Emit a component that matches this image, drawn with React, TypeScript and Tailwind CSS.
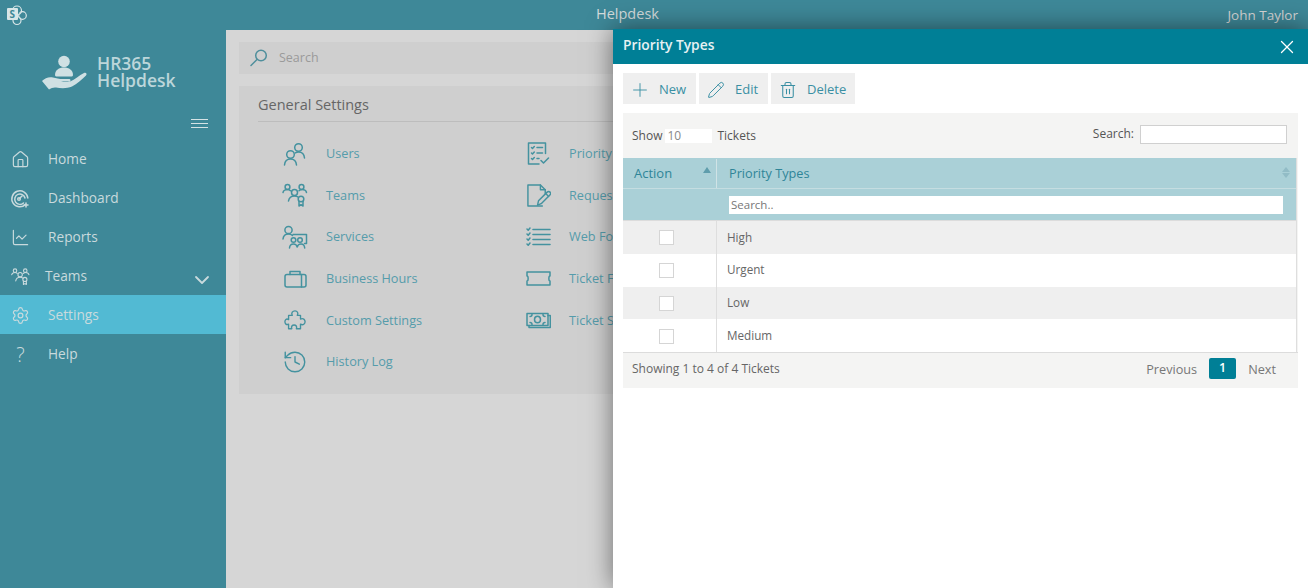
import React from 'react';
import { Home, LineChart, Settings, ChevronDown, Plus, Pencil, Trash2, X, History } from 'lucide-react';

type IconProps = { className?: string };

const Svg = ({ className, children, box = '0 0 28 28' }: IconProps & { children: React.ReactNode; box?: string }) => (
  <svg viewBox={box} fill="none" stroke="currentColor" strokeWidth="1.5" strokeLinecap="round" strokeLinejoin="round" className={className}>
    {children}
  </svg>
);

const SharePointLogo = () => (
  <svg viewBox="0 0 22 22" className="w-[22px] h-[22px] text-[#d8e6e8]" fill="none" stroke="currentColor" strokeWidth="1.2">
    <circle cx="11" cy="6.5" r="4.5" />
    <circle cx="16.5" cy="11.5" r="3.8" />
    <circle cx="11" cy="16.5" r="4" />
    <rect x="1" y="4" width="11" height="12" rx="1" fill="currentColor" stroke="none" />
    <text x="3.6" y="13.5" fontSize="10" fontWeight="700" fill="#3e8898" stroke="none" fontFamily="Open Sans, sans-serif">S</text>
  </svg>
);

const HandLogo = () => (
  <svg viewBox="0 0 50 38" className="w-[50px] h-[38px] text-[#cfe0e3]" fill="currentColor">
    <circle cx="23" cy="6.5" r="5.8" />
    <path d="M14 20c0-5 4-7.5 9-7.5s9 2.5 9 7.5c0 1-1 1.5-2 1.5H16c-1 0-2-.5-2-1.5z" />
    <path d="M1 26c3-3 7-4.5 11-3.5 3 .8 6 1.5 10 1.5h6c2 0 2 2.5 0 2.5h-8c3 .8 6 .8 9 0 5-2 9-6 14-8.5 2-1 3.5 1 2 2.5-4 4-9 8.5-14 11-5 2.2-11 2-16 1-2-.4-5 .5-7 2z" />
  </svg>
);

const SearchGlass = ({ className }: IconProps) => (
  <Svg className={className} box="0 0 18 18">
    <circle cx="11" cy="6.5" r="5.3" />
    <path d="M7 10.5L1 16.5" />
  </Svg>
);

const DashIcon = ({ className }: IconProps) => (
  <Svg className={className} box="0 0 20 20">
    <path d="M15.5 15.5A8 8 0 1 1 17.8 9" />
    <path d="M13.5 14A5.2 5.2 0 1 1 15 9" />
    <path d="M9.5 9.5l2.5-2.5" />
    <circle cx="9" cy="10" r="1.3" />
    <path d="M16 14v4M14 16h4" />
  </Svg>
);

const TeamsIcon = ({ className }: IconProps) => (
  <Svg className={className} box="0 0 26 24">
    <circle cx="5.5" cy="4" r="2.4" />
    <circle cx="19.5" cy="4" r="2.4" />
    <circle cx="12.5" cy="9.5" r="3" />
    <path d="M1 9.5c.5-2 2-3 4.5-3 1 0 2 .3 3 1.2M24.5 9.5c-.4-2-2-3-4.500-3-1 0-2 .3-3 1.200M6.5 18c.5-3 3-5 6-5 1.5 0 2.5.3 3.5 1" />
    <circle cx="19" cy="16" r="2.8" />
    <path d="M17 18.5V23l2-1.3 2 1.3v-4.5" />
  </Svg>
);

const UsersIcon = ({ className }: IconProps) => (
  <Svg className={className} box="0 0 24 24">
    <circle cx="15.5" cy="5.5" r="3.8" />
    <path d="M21.5 16c-.3-3.5-2.5-6-6-6-1.2 0-2.3.3-3.2.9" />
    <circle cx="7.5" cy="12.5" r="3.8" />
    <path d="M1.500 23c.3-3.5 2.5-6 6-6s5.700 2.500 6 6" />
  </Svg>
);

const ServicesIcon = ({ className }: IconProps) => (
  <Svg className={className} box="0 0 26 24">
    <circle cx="6.5" cy="5" r="3.6" />
    <path d="M1 14c.3-3 2.5-5 5.500-5 1.500 0 3 .6 4 1.500" />
    <path d="M11 9.5h13.5v9h-2" />
    <circle cx="11.5" cy="15" r="2.3" />
    <circle cx="18" cy="15" r="2.3" />
    <path d="M7.5 23c.2-2.5 1.8-4 4-4s3.3 1.3 3.7 3c.4-1.7 1.6-3 3.8-3s3.5 1.5 3.7 4" />
  </Svg>
);

const CaseIcon = ({ className }: IconProps) => (
  <Svg className={className} box="0 0 23 18">
    <rect x="1" y="4.5" width="21" height="12.5" rx="2" />
    <path d="M6 4.5V1.500h10v3M17.500 4.500V17" />
  </Svg>
);

const PuzzleIcon = ({ className }: IconProps) => (
  <Svg className={className} box="0 0 24 24">
    <path d="M5 7h4c-1.5-3 .5-5 3-5s4 2.5 2.5 5H18v4c3-1.5 5 .5 5 3s-2.5 4-5 2.5v5h-4.5c1-2.5-.5-4-2.5-4s-3.5 1.5-2.5 4H5v-5c-2.5 1.2-4-.5-4-2.5S2.5 10 5 11.5z" />
  </Svg>
);

const ChecklistIcon = ({ className }: IconProps) => (
  <Svg className={className} box="0 0 24 24">
    <path d="M19.5 12V1.5h-17v21H13" />
    <path d="M5.5 6l1 1 1.8-2M5.5 11.5l1 1 1.8-2M5.5 17l1 1 1.8-2M11 6h5.5M11 11.5h5.5M11 17h2" />
    <path d="M15 19l2.5 2.5 5-5" />
  </Svg>
);

const RequestIcon = ({ className }: IconProps) => (
  <Svg className={className} box="0 0 26 26">
    <path d="M17 24H2V2h13l5 5v4" />
    <path d="M15 2v5h5" />
    <path d="M12 23l1-4.5 9-9c1-1 2-1 3 0s.8 2-.2 3l-9 9z" />
    <path d="M20.5 11l3 3" />
  </Svg>
);

const ListIcon = ({ className }: IconProps) => (
  <Svg className={className} box="0 0 25 20">
    <path d="M1 2l1.2 1.2L4 1M1 7l1.2 1.2L4 6M1 12l1.2 1.2L4 11M1 17l1.2 1.2L4 16" />
    <path d="M7 2.5h17M7 7.5h17M7 12.5h17M7 17.5h17" strokeWidth="1.6" />
  </Svg>
);

const TicketIcon = ({ className }: IconProps) => (
  <Svg className={className} box="0 0 25 15">
    <path d="M1 1h23v4c-1.5 0-1.5 5 0 5v4H1v-4c1.5 0 1.5-5 0-5z" />
  </Svg>
);

const MoneyIcon = ({ className }: IconProps) => (
  <Svg className={className} box="0 0 25 16">
    <rect x="1" y="1" width="21" height="12" />
    <path d="M22 3h2.3v12H3v-2" />
    <ellipse cx="11.5" cy="7" rx="3" ry="3.3" />
    <path d="M4 4c1.5 0 2-.5 2-2M19 4c-1.5 0-2-.5-2-2M4 10c1.5 0 2 .5 2 2M19 10c-1.5 0-2 .5-2 2" />
  </Svg>
);

const navItems = [
  { label: 'Home', icon: <Home className="w-[19px] h-[19px]" strokeWidth={1.5} /> },
  { label: 'Dashboard', icon: <DashIcon className="w-[20px] h-[20px]" /> },
  { label: 'Reports', icon: <LineChart className="w-[19px] h-[19px]" strokeWidth={1.5} /> },
];

const leftLinks = [
  { label: 'Users', icon: <UsersIcon className="w-[24px] h-[24px]" /> },
  { label: 'Teams', icon: <TeamsIcon className="w-[26px] h-[24px]" /> },
  { label: 'Services', icon: <ServicesIcon className="w-[26px] h-[24px]" /> },
  { label: 'Business Hours', icon: <CaseIcon className="w-[23px] h-[18px]" /> },
  { label: 'Custom Settings', icon: <PuzzleIcon className="w-[22px] h-[22px]" /> },
  { label: 'History Log', icon: <History className="w-[26px] h-[26px]" strokeWidth={1.3} /> },
];

const rightLinks = [
  { label: 'Priority Types', icon: <ChecklistIcon className="w-[24px] h-[25px]" /> },
  { label: 'Request Types', icon: <RequestIcon className="w-[25px] h-[25px]" /> },
  { label: 'Web Forms', icon: <ListIcon className="w-[25px] h-[20px]" /> },
  { label: 'Ticket Fields', icon: <TicketIcon className="w-[25px] h-[15px]" /> },
  { label: 'Ticket Status', icon: <MoneyIcon className="w-[25px] h-[17px]" /> },
];

const rows = ['High', 'Urgent', 'Low', 'Medium'];

const SettingsLink = ({ label, icon }: { label: string; icon: React.ReactNode }) => (
  <div className="flex items-center h-[41.6px] whitespace-nowrap">
    <span className="w-[26px] flex justify-center text-[#44929f]">{icon}</span>
    <span className="ml-[18px] text-[12.7px] text-[#559cab]">{label}</span>
  </div>
);

const ToolButton = ({ label, icon, className }: { label: string; icon: React.ReactNode; className: string }) => (
  <button type="button" className={`flex items-center h-[31px] pt-[2px] bg-[#efefef] text-[#3a8fa3] text-[13px] ${className}`}>
    {icon}
    <span>{label}</span>
  </button>
);

export default function App() {
  return (
    <div className="relative w-[1308px] h-[588px] overflow-hidden bg-[#d6d6d6] font-['Open_Sans','Noto_Sans',sans-serif]">
      <header className="relative flex items-center justify-between h-[30px] bg-[#3e8898] pl-[6px] pr-[10px]">
        <SharePointLogo />
        <span className="absolute left-[596px] top-[3px] text-[14.5px] text-[#d4dcdd]">Helpdesk</span>
        <span className="text-[13.5px] text-[#d6d6d6]">John Taylor</span>
      </header>

      <div className="flex h-[558px]">
        <aside className="w-[226px] shrink-0 bg-[#3e8898] text-[#c9dadd]">
          <div className="flex items-center h-[85px] pl-[41px] pt-[2px]">
            <HandLogo />
            <div className="ml-[6px] mt-[-3px] text-[17.5px] leading-[17px] font-semibold text-[#bcd6da]">
              HR365
              <br />
              Helpdesk
            </div>
          </div>
          <div className="flex justify-end pr-[18px] h-[24px]">
            <div className="flex flex-col gap-[3px] w-[17px] mt-[4px]">
              <span className="h-px bg-[#d5e3e5]" />
              <span className="h-px bg-[#d5e3e5]" />
              <span className="h-px bg-[#d5e3e5]" />
            </div>
          </div>
          <nav>
            {navItems.map((item) => (
              <div key={item.label} className="flex items-center h-[39px] pt-[2px] pl-[10px]">
                <span className="w-[20px] flex justify-center">{item.icon}</span>
                <span className="ml-[18px] text-[13.7px]">{item.label}</span>
              </div>
            ))}
            <div className="flex items-center h-[39px] pt-[2px] pl-[11px]">
              <TeamsIcon className="w-[19px] h-[19px]" />
              <span className="ml-[15px] text-[13.7px]">Teams</span>
              <ChevronDown className="ml-auto mr-[12px] mt-[6px] w-[24px] h-[24px]" strokeWidth={1.8} />
            </div>
            <div className="flex items-center h-[39px] pt-[2px] pl-[11px] bg-[#52bad3]">
              <Settings className="w-[19px] h-[19px]" strokeWidth={1.5} />
              <span className="ml-[18px] text-[13.7px]">Settings</span>
            </div>
            <div className="flex items-center h-[39px] pt-[2px] pl-[11px]">
              <span className="w-[19px] text-center text-[20px] font-light">?</span>
              <span className="ml-[18px] text-[13.7px]">Help</span>
            </div>
          </nav>
        </aside>

        <main className="flex-1 pl-[13px] pt-[12px]">
          <div className="flex items-center h-[32px] bg-[#cfcfcf] pl-[11px]">
            <SearchGlass className="w-[18px] h-[18px] text-[#4f8f9c]" />
            <span className="ml-[11px] text-[12.5px] text-[#9a9a9a]">Search</span>
          </div>
          <section className="mt-[12px] h-[308px] bg-[#cfcfcf] pl-[19px] pt-[9px]">
            <h2 className="text-[14.5px] leading-[20px] text-[#666]">General Settings</h2>
            <div className="mt-[6px] h-px bg-[#bdbdbd]" />
            <div className="flex mt-[11px] pl-[24px]">
              <div className="w-[243px]">
                {leftLinks.map((l) => (
                  <SettingsLink key={l.label} {...l} />
                ))}
              </div>
              <div>
                {rightLinks.map((l) => (
                  <SettingsLink key={l.label} {...l} />
                ))}
              </div>
            </div>
          </section>
        </main>
      </div>

      {/* slide-in panel */}
      <div className="absolute right-0 top-[29px] bottom-0 w-[695px] bg-white shadow-[0_0_24px_rgba(0,0,0,0.5)]">
        <div className="flex items-center justify-between h-[35px] pb-[2px] bg-[#007f96] pl-[10px] pr-[10px]">
          <span className="text-[13.8px] font-semibold text-[#e6f1f3]">Priority Types</span>
          <X className="w-[22px] h-[22px] mt-[2px] text-white" strokeWidth={1.4} />
        </div>

        <div className="flex gap-[3px] mt-[9px] ml-[10px]">
          <ToolButton label="New" className="w-[73px] pl-[6px]" icon={<Plus className="w-[22px] h-[22px] mr-[8px]" strokeWidth={1} />} />
          <ToolButton label="Edit" className="w-[69px] pl-[8px]" icon={<Pencil className="w-[18px] h-[18px] mr-[10px]" strokeWidth={1.3} />} />
          <ToolButton label="Delete" className="w-[84px] pl-[8px]" icon={<Trash2 className="w-[18px] h-[18px] mr-[10px]" strokeWidth={1.4} />} />
        </div>

        <div className="mt-[9px] ml-[10px] w-[675px] h-[275px] bg-[#f4f4f3]">
          <div className="flex items-center h-[45px] pl-[9px] pr-[11px] text-[12px] text-[#555]">
            <span>Show</span>
            <span className="ml-[3px] w-[47px] h-[14px] bg-white pl-[2px] leading-[14px] text-[#888]">10</span>
            <span className="ml-[5px]">Tickets</span>
            <span className="ml-auto mb-[3px]">Search:</span>
            <span className="ml-[6px] mb-[2px] w-[147px] h-[19px] bg-white border border-[#d0d0d0]" />
          </div>

          <div className="w-[674px] bg-white border-r border-[#dedede]">
            <div className="flex h-[31px] pt-[1px] bg-[#aad0d7] text-[13px] text-[#2f8598] border-b border-[#c5dde1]">
              <div className="relative flex items-center w-[94px] pl-[11px] border-r border-[#d0e3e6]">
                Action
                <span className="absolute right-[5px] top-[8px] w-0 h-0 border-x-[4px] border-x-transparent border-b-[6px] border-b-[#5f9dac]" />
              </div>
              <div className="relative flex items-center flex-1 pl-[12px] text-[12.7px]">
                Priority Types
                <span className="absolute right-[6px] top-[8px] flex flex-col gap-[1px]">
                  <span className="w-0 h-0 border-x-[4px] border-x-transparent border-b-[5px] border-b-[#92bcc6]" />
                  <span className="w-0 h-0 border-x-[4px] border-x-transparent border-t-[5px] border-t-[#92bcc6]" />
                </span>
              </div>
            </div>
            <div className="flex items-center h-[32px] bg-[#aad0d7] pl-[106px] pr-[13px] border-b border-[#dcdcdc]">
              <div className="flex-1 h-[18px] bg-white pl-[2px] text-[11.5px] leading-[18px] text-[#777]">Search..</div>
            </div>
            {rows.map((row, i) => (
              <div key={row} className={`flex h-[32.8px] ${i % 2 === 0 ? 'bg-[#efefef]' : 'bg-white'}`}>
                <div className="flex items-center justify-center w-[94px] pr-[6px] pt-[1px] border-r border-[#dedede]">
                  <span className="w-[15px] h-[15px] bg-white border border-[#d5d5d5]" />
                </div>
                <div className="flex items-center pl-[10px] text-[11.7px] text-[#666]">{row}</div>
              </div>
            ))}
          </div>

          <div className="flex items-center h-[36px] pb-[3px] pl-[9px] border-t border-[#dcdcdc] text-[12px] text-[#666]">
            <span>Showing 1 to 4 of 4 Tickets</span>
            <span className="ml-auto text-[12.7px] text-[#777]">Previous</span>
            <span className="ml-[12px] mb-[1px] flex items-center justify-center w-[27px] h-[21px] bg-[#007f96] rounded-[2px] text-[12.5px] font-semibold text-white">1</span>
            <span className="ml-[12px] mr-[22px] text-[12.7px] text-[#777]">Next</span>
          </div>
        </div>
      </div>
    </div>
  );
}
